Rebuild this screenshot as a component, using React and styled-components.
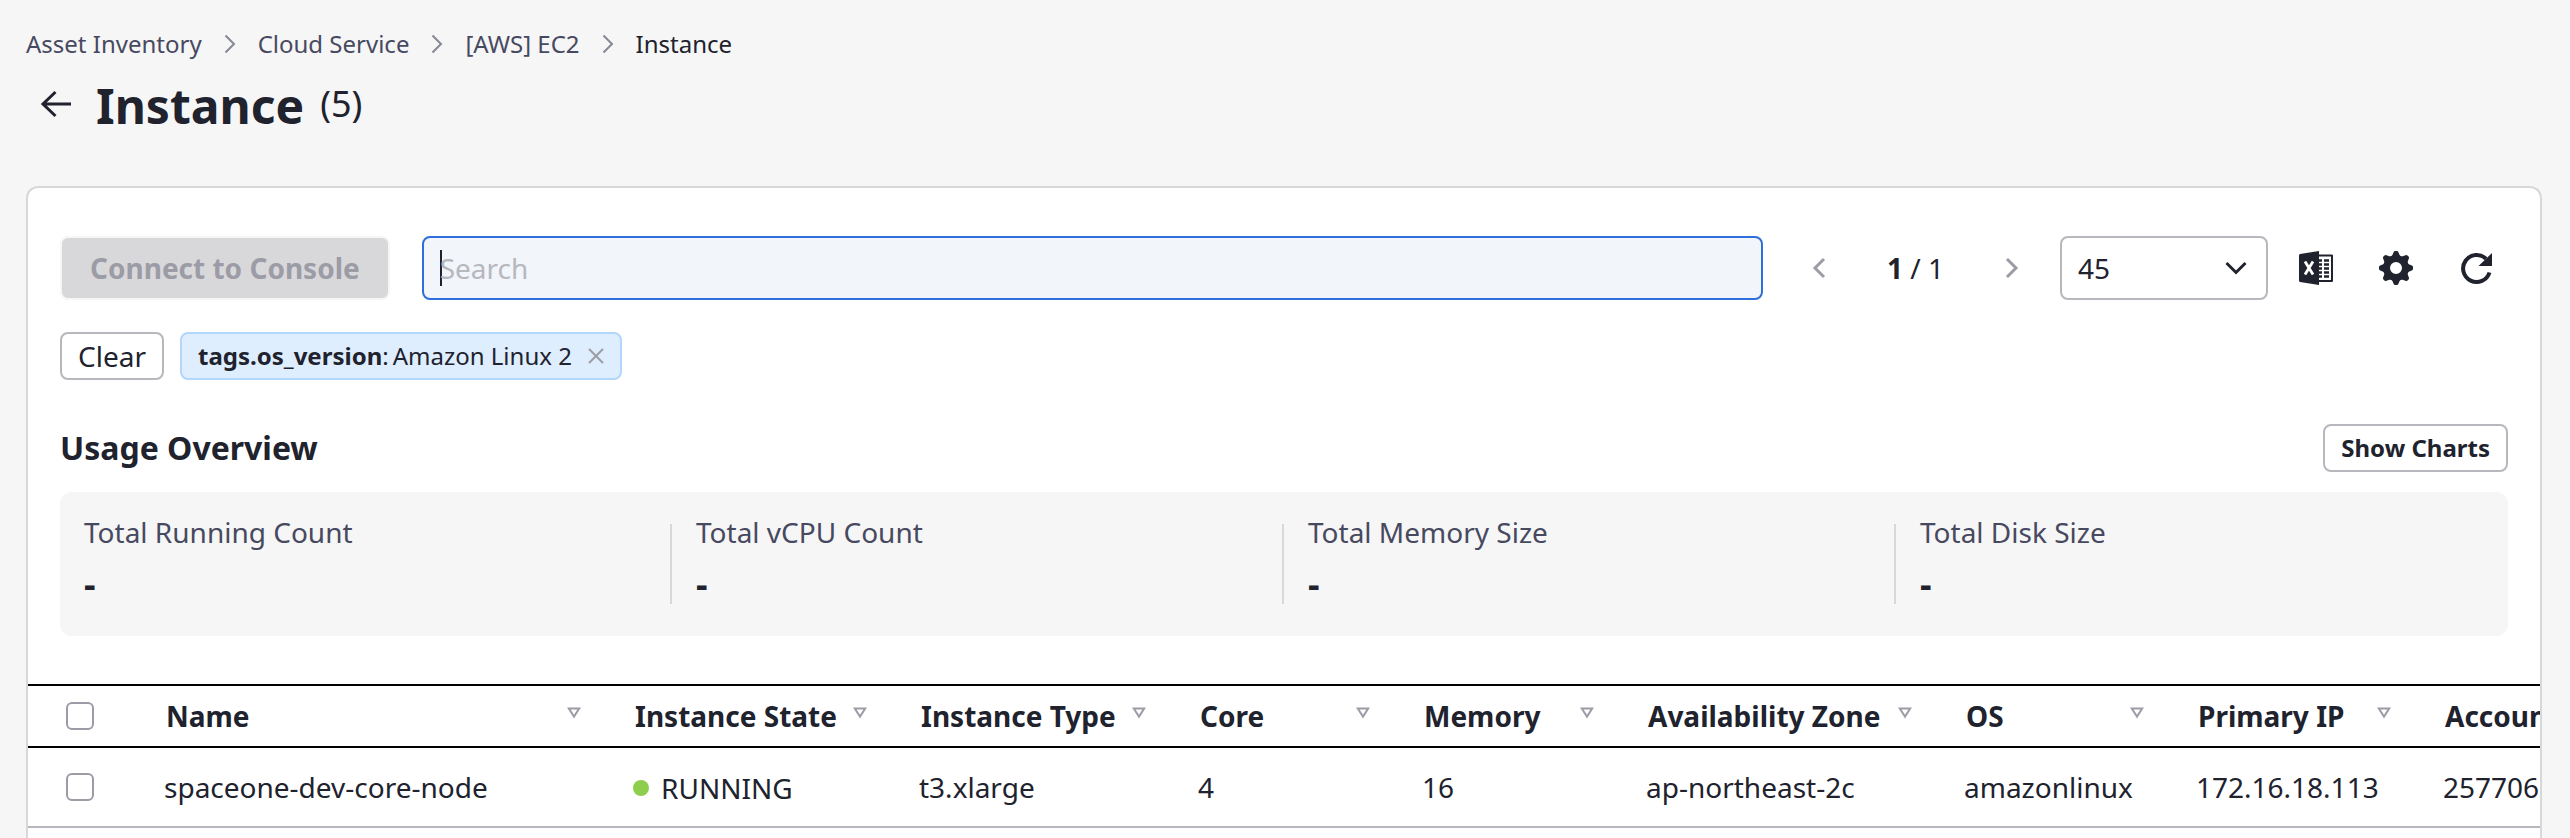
import React from "react";
import styled, { createGlobalStyle } from "styled-components";

const ink = "#20222e";
const muted = "#474960";
const line = "#d8d8da";
const control = "#b7b7be";

const GlobalStyle = createGlobalStyle`
  * { box-sizing: border-box; }
  body {
    margin: 0;
    background: #f6f6f6;
    color: ${ink};
    font-family: "Noto Sans", "Open Sans", sans-serif;
    font-size: 28px;
    line-height: 40px;
  }
  button, input, select { font: inherit; color: inherit; margin: 0; }
  button { cursor: pointer; }
`;

const Page = styled.main`
  display: flex;
  flex-direction: column;
  min-height: 100vh;
  padding: 28px 28px 0 26px;
`;

const Breadcrumbs = styled.nav`
  display: flex;
  align-items: center;
  gap: 22px;
  font-size: 24px;
  line-height: 32px;
`;

const Crumb = styled.a`
  color: ${(p) => (p["aria-current"] ? ink : muted)};
  text-decoration: none;
`;

const Heading = styled.header`
  display: flex;
  align-items: center;
  gap: 16px;
  padding: 12px 0 0 10px;
`;

const Title = styled.h1`
  margin: 0;
  padding: 4px 0 0 4px;
  font-size: 48px;
  line-height: 60px;
`;

const Count = styled.span`
  font-size: 36px;
  line-height: 56px;
`;

const BareButton = styled.button`
  display: flex;
  align-items: center;
  justify-content: center;
  width: ${(p) => p.$size}px;
  height: ${(p) => p.$size}px;
  padding: 0;
  border: 0;
  background: none;
`;

const Panel = styled.section`
  flex: 1;
  margin-top: 50px;
  padding-top: 48px;
  border: 2px solid ${line};
  border-bottom: 0;
  border-radius: 12px 12px 0 0;
  background: #fff;
  overflow: hidden;
`;

const Toolbar = styled.div`
  display: flex;
  align-items: center;
  padding: 0 36px 0 32px;
`;

const PrimaryButton = styled.button`
  height: 64px;
  padding: 0 28px;
  border: 2px solid #f6f6f6;
  border-radius: 8px;
  background: ${line};
  font-weight: 700;
  &:disabled { color: #9c9ca6; }
`;

const SearchBox = styled.label`
  display: flex;
  align-items: center;
  flex: 1;
  height: 64px;
  margin-left: 32px;
  padding: 0 16px;
  border: 2px solid #2f6fdb;
  border-radius: 8px;
  background: #f2f5fa;
`;

const Caret = styled.span`
  width: 2px;
  height: 36px;
  margin-right: -2px;
  background: ${ink};
`;

const SearchInput = styled.input`
  flex: 1;
  min-width: 0;
  padding: 0;
  border: 0;
  outline: 0;
  background: none;
  &::placeholder { color: ${control}; opacity: 1; }
`;

const Pager = styled.div`
  display: flex;
  align-items: center;
  gap: 44px;
  margin: 0 24px 0 32px;
`;

const PageSize = styled.div`
  display: grid;
  align-items: center;
  width: 208px;
  margin-right: 20px;
  > * { grid-area: 1 / 1; }
  > svg { justify-self: end; margin-right: 20px; pointer-events: none; }
`;

const Select = styled.select`
  appearance: none;
  width: 100%;
  height: 64px;
  padding: 0 16px;
  border: 2px solid ${control};
  border-radius: 8px;
  background: #fff;
`;

const Tools = styled.div`
  display: flex;
  gap: 24px;
`;

const Filters = styled.div`
  display: flex;
  gap: 16px;
  padding: 32px 32px 0;
`;

const SmallButton = styled.button`
  height: 48px;
  padding: 0 16px;
  border: 2px solid ${control};
  border-radius: 8px;
  background: #fff;
  font-size: ${(p) => (p.$strong ? 24 : 28)}px;
  font-weight: ${(p) => (p.$strong ? 700 : 400)};
  line-height: 40px;
`;

const Tag = styled.span`
  display: flex;
  align-items: center;
  height: 48px;
  padding: 0 8px 0 16px;
  border: 2px solid #b3d7fa;
  border-radius: 8px;
  background: #dfeefe;
  font-size: 24px;
`;

const TagValue = styled.span`
  margin: 0 8px 0 4px;
`;

const SectionHead = styled.div`
  display: flex;
  align-items: center;
  justify-content: space-between;
  padding: 44px 32px 20px;
`;

const SectionTitle = styled.h2`
  margin: 0;
  font-size: 32px;
  line-height: 48px;
`;

const Stats = styled.dl`
  display: grid;
  grid-template-columns: repeat(4, 1fr);
  margin: 0 32px 48px;
  padding: 32px 0;
  border-radius: 12px;
  background: #f6f6f6;
`;

const Stat = styled.div`
  height: 80px;
  padding-left: 24px;
  border-right: 2px solid ${line};
  &:last-child { border-right: 0; }
`;

const StatLabel = styled.dt`
  margin-top: -12px;
  color: ${muted};
`;

const StatValue = styled.dd`
  margin: 8px 0 0;
  font-size: 36px;
  font-weight: 700;
  line-height: 48px;
`;

const Table = styled.table`
  width: 2720px;
  table-layout: fixed;
  border-collapse: separate;
  border-spacing: 0;
`;

const Col = styled.col`
  width: ${(p) => p.$width}px;
`;

const HeadCell = styled.th`
  height: 64px;
  padding: 0 20px 0 32px;
  border-top: 2px solid #000;
  border-bottom: 2px solid #000;
  text-align: left;
  white-space: nowrap;
`;

const HeadContent = styled.div`
  display: flex;
  align-items: center;
  justify-content: space-between;
  padding-left: 2px;
  > svg { margin-bottom: 6px; }
`;

const Cell = styled.td`
  height: 80px;
  padding: 0 0 0 32px;
  border-bottom: 2px solid ${control};
  white-space: nowrap;
`;

const Checkbox = styled.input`
  appearance: none;
  display: block;
  width: 28px;
  height: 28px;
  margin: 0 0 0 6px;
  border: 2px solid #9c9ca6;
  border-radius: 6px;
  background: #fff;
`;

const State = styled.span`
  display: flex;
  align-items: center;
  gap: 12px;
  padding-top: 2px;
  &::before {
    content: "";
    width: 16px;
    height: 16px;
    border-radius: 50%;
    background: #8fce4c;
  }
`;

const Chevron = ({ w, h, d, stroke, sw = 2 }) => (
  <svg width={w} height={h} viewBox={`0 0 ${w} ${h}`} fill="none" stroke={stroke} strokeWidth={sw} aria-hidden="true">
    <path d={d} />
  </svg>
);

const BackIcon = () => (
  <svg width="32" height="32" viewBox="0 0 32 32" fill="none" stroke={ink} strokeWidth="3" aria-hidden="true">
    <path d="M31 16H3M15.500 4L3 16l12.500 12" />
  </svg>
);

const CloseIcon = () => (
  <svg width="16" height="16" viewBox="0 0 16 16" fill="none" stroke="#9c9ca6" strokeWidth="2" aria-hidden="true">
    <path d="M1 1l14 14M15 1L1 15" />
  </svg>
);

const SortIcon = () => (
  <svg width="14" height="12" viewBox="0 0 14 12" fill="none" stroke="#9c9ca6" strokeWidth="2" aria-hidden="true">
    <path d="M1.800 1.500h10.400L7 9.600z" />
  </svg>
);

const ExcelIcon = () => (
  <svg width="36" height="36" viewBox="0 0 36 36" aria-hidden="true">
    <path d="M2 4L21 1v34L2 32Q1 31.800 1 30.500V5.500Q1 4.200 2 4z" fill={ink} />
    <path d="M21 5.500h13V31H21" fill="none" stroke={ink} strokeWidth="2" strokeLinejoin="round" />
    <path d="M21 10.500h3M26 10.500h5M21 14.500h3M26 14.500h5M21 18.500h3M26 18.500h5M21 22.500h3M26 22.500h5M21 26.500h3M26 26.500h5" stroke={ink} strokeWidth="2.400" />
    <path d="M7 11.500l8 13M15 11.500l-8 13" stroke="#fff" strokeWidth="2.800" />
  </svg>
);

const teeth = [0, 45, 90, 135, 180, 225, 270, 315];
const GearIcon = () => (
  <svg width="36" height="36" viewBox="0 0 36 36" aria-hidden="true">
    <circle cx="18" cy="18" r="9.500" fill="none" stroke={ink} strokeWidth="7" />
    {teeth.map((a) => (
      <path key={a} transform={`rotate(${a} 18 18)`} d="M13.500 7L15.600 2.200Q16 1 17.200 1h1.600Q20 1 20.400 2.200L22.500 7z" fill={ink} />
    ))}
  </svg>
);

const RefreshIcon = () => (
  <svg width="36" height="36" viewBox="0 0 36 36" aria-hidden="true">
    <path d="M31.500 22.500A13.500 13.500 0 1 1 28 8.800" fill="none" stroke={ink} strokeWidth="4" />
    <path d="M34 3v13H20.500z" fill={ink} />
  </svg>
);

const crumbs = ["Asset Inventory", "Cloud Service", "[AWS] EC2", "Instance"];
const stats = ["Total Running Count", "Total vCPU Count", "Total Memory Size", "Total Disk Size"];
const columns = [
  { label: "Name", width: 469 },
  { label: "Instance State", width: 286 },
  { label: "Instance Type", width: 279 },
  { label: "Core", width: 224 },
  { label: "Memory", width: 224 },
  { label: "Availability Zone", width: 318 },
  { label: "OS", width: 232 },
  { label: "Primary IP", width: 247 },
  { label: "Account ID", width: 337 },
];
const rows = [
  ["spaceone-dev-core-node", "RUNNING", "t3.xlarge", "4", "16", "ap-northeast-2c", "amazonlinux", "172.16.18.113", "2577063"],
];

export default function App() {
  return (
    <Page>
      <GlobalStyle />
      <Breadcrumbs aria-label="Breadcrumb">
        {crumbs.map((c, i) => (
          <React.Fragment key={c}>
            {i > 0 && <Chevron w={12} h={20} d="M1.500 1.500L10 10L1.500 18.500" stroke="#858895" />}
            <Crumb href="#" aria-current={i === crumbs.length - 1 ? "page" : undefined}>{c}</Crumb>
          </React.Fragment>
        ))}
      </Breadcrumbs>
      <Heading>
        <BareButton $size={40} aria-label="Back"><BackIcon /></BareButton>
        <Title>Instance</Title>
        <Count>(5)</Count>
      </Heading>
      <Panel>
        <Toolbar>
          <PrimaryButton disabled>Connect to Console</PrimaryButton>
          <SearchBox>
            <Caret />
            <SearchInput type="text" placeholder="Search" aria-label="Search" />
          </SearchBox>
          <Pager>
            <BareButton $size={48} aria-label="Previous page">
              <Chevron w={14} h={22} d="M12 2L3 11L12 20" stroke="#9c9ca6" sw={3} />
            </BareButton>
            <span><b>1</b> / 1</span>
            <BareButton $size={48} aria-label="Next page">
              <Chevron w={14} h={22} d="M2 2L11 11L2 20" stroke="#9c9ca6" sw={3} />
            </BareButton>
          </Pager>
          <PageSize>
            <Select aria-label="Rows per page" defaultValue="45">
              <option>15</option>
              <option>30</option>
              <option>45</option>
            </Select>
            <Chevron w={24} h={16} d="M2.500 3L12 12.500L21.500 3" stroke={ink} sw={3} />
          </PageSize>
          <Tools>
            <BareButton $size={56} aria-label="Export to Excel"><ExcelIcon /></BareButton>
            <BareButton $size={56} aria-label="Settings"><GearIcon /></BareButton>
            <BareButton $size={56} aria-label="Refresh"><RefreshIcon /></BareButton>
          </Tools>
        </Toolbar>
        <Filters>
          <SmallButton>Clear</SmallButton>
          <Tag>
            <b>tags.os_version</b>:<TagValue>Amazon Linux 2</TagValue>
            <BareButton $size={32} aria-label="Remove filter"><CloseIcon /></BareButton>
          </Tag>
        </Filters>
        <SectionHead>
          <SectionTitle>Usage Overview</SectionTitle>
          <SmallButton $strong>Show Charts</SmallButton>
        </SectionHead>
        <Stats>
          {stats.map((s) => (
            <Stat key={s}>
              <StatLabel>{s}</StatLabel>
              <StatValue>-</StatValue>
            </Stat>
          ))}
        </Stats>
        <Table>
          <colgroup>
            <Col $width={104} />
            {columns.map((c) => <Col key={c.label} $width={c.width} />)}
          </colgroup>
          <thead>
            <tr>
              <HeadCell><Checkbox type="checkbox" aria-label="Select all" /></HeadCell>
              {columns.map((c) => (
                <HeadCell key={c.label} scope="col">
                  <HeadContent>{c.label}<SortIcon /></HeadContent>
                </HeadCell>
              ))}
            </tr>
          </thead>
          <tbody>
            {rows.map((r) => (
              <tr key={r[0]}>
                <Cell><Checkbox type="checkbox" aria-label={`Select ${r[0]}`} /></Cell>
                {r.map((v, i) => (
                  <Cell key={columns[i].label}>{i === 1 ? <State>{v}</State> : v}</Cell>
                ))}
              </tr>
            ))}
          </tbody>
        </Table>
      </Panel>
    </Page>
  );
}
